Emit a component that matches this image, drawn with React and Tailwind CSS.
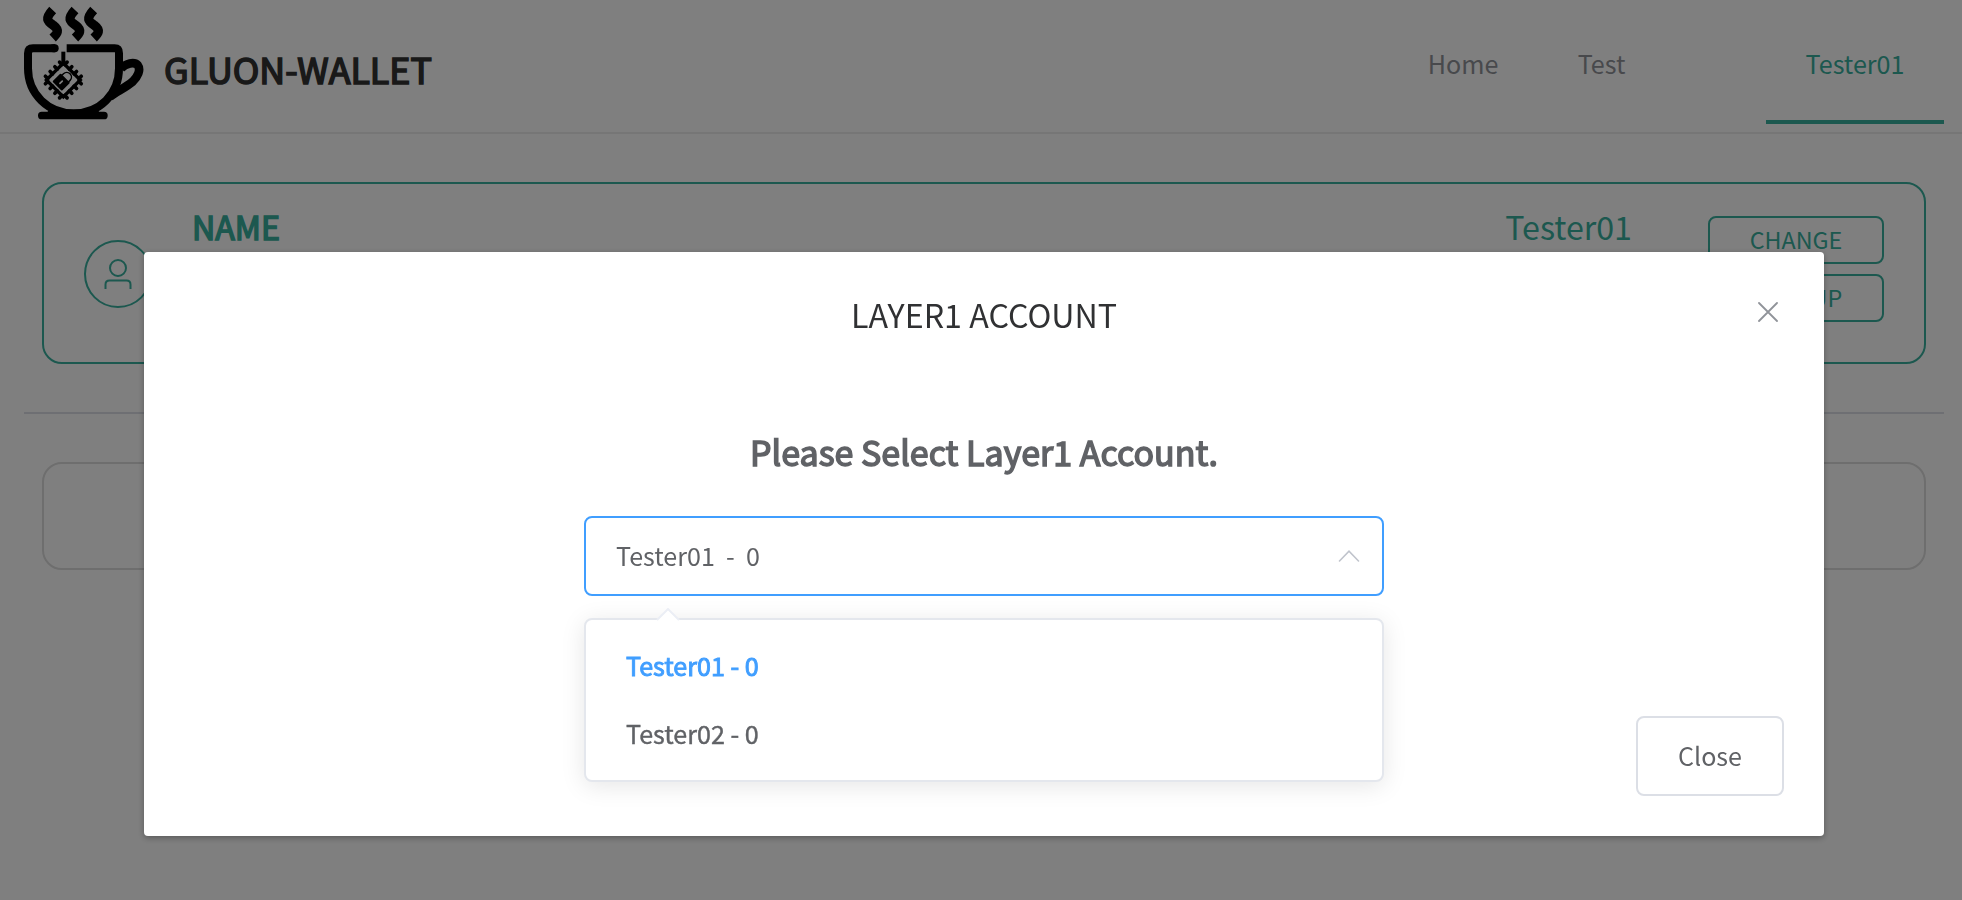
import React from "react";

function Logo() {
  return (
    <svg viewBox="72 18 360 342" className="h-[114px] w-[120px] shrink-0" fill="none" stroke="#000">
      <g strokeWidth="28">
        <path d="M158 30C134 56 142 64 160 76C180 91 172 101 158 114" />
        <path d="M225 30C201 56 209 64 227 76C247 91 239 101 225 114" />
        <path d="M281 30C257 56 265 64 283 76C303 91 295 101 281 114" />
      </g>
      <path strokeWidth="24" d="M166 145H99Q84 145 84 160V205C84 283 145 340 221 340C298 340 357 283 357 205V160Q357 145 344 145H200" />
      <path d="M160 145H164" strokeLinecap="round" strokeWidth="24" />
      <path d="M363 205C378 190 402 184 413 195C424 210 412 232 398 245C378 262 352 274 330 290" strokeWidth="26" />
      <rect x="114" y="335" width="209" height="23" rx="11" fill="#000" stroke="none" />
      <path d="M150 325Q220 352 290 325L300 340H140Z" fill="#000" stroke="none" />
      <path d="M190 155V186" strokeWidth="12" />
      <g transform="translate(190 240) rotate(45)">
        <rect x="-36" y="-36" width="72" height="72" strokeWidth="10" />
        <path
          strokeWidth="11"
          strokeLinecap="round"
          d="M-30 -36V-46M-10 -36V-46M10 -36V-46M30 -36V-46M-30 36V46M-10 36V46M10 36V46M30 36V46M-36 -30H-46M-36 -10H-46M-36 10H-46M-36 30H-46M36 -30H46M36 -10H46M36 10H46M36 30H46"
        />
      </g>
      <g transform="translate(184 246) rotate(45)">
        <rect x="-20" y="-17" width="40" height="35" rx="3" fill="#000" stroke="none" />
        <path d="M-13 -16V-22A14 14 0 0 1 15 -22V-14" strokeWidth="4.5" />
        <path d="M0 -4V6" stroke="#fff" strokeWidth="5" strokeLinecap="round" />
      </g>
    </svg>
  );
}

function Header() {
  return (
    <header className="flex h-[134px] items-start border-b-2 border-[#ececec] pl-6 pr-[18px]">
      <div className="pt-[6px]">
        <Logo />
      </div>
      <h1 className="ml-[20px] mt-10 text-[35.8px] leading-[56px] text-[#333] [-webkit-text-stroke:1.6px_#333]">
        GLUON-WALLET
      </h1>
      <nav className="ml-auto flex h-[124px] text-[25.1px] leading-[126px] text-[#909399]">
        <a className="w-[150px] text-center">Home</a>
        <a className="w-[127px] text-center">Test</a>
        <a className="ml-[101px] w-[178px] border-b-4 border-[#38b09e] text-center text-[#38b09e]">Tester01</a>
      </nav>
    </header>
  );
}

function ProfileCard() {
  return (
    <section className="ml-[42px] mt-12 flex h-[182px] w-[1884px] rounded-[20px] border-2 border-[#38b09e] pl-10 pr-10 text-[#38b09e]">
      <div className="mt-14 flex h-[68px] w-[68px] items-center justify-center rounded-full border-2 border-[#38b09e]">
        <svg viewBox="0 0 28 32" className="h-8 w-7" fill="none" stroke="currentColor" strokeWidth="2">
          <circle cx="14" cy="10" r="8" />
          <path d="M1.5 31V26.5Q1.5 22.500 5.500 22.500H22.500Q26.500 22.500 26.500 26.500V31" />
        </svg>
      </div>
      <h2 className="ml-[40px] mt-4 text-[32.2px] leading-[52px] [-webkit-text-stroke:1.5px_#38b09e]">NAME</h2>
      <p className="ml-auto mr-[76px] mt-4 text-[32.2px] leading-[52px]">Tester01</p>
      <div className="mt-8 flex w-[176px] flex-col gap-[10px] text-[23.3px]">
        <button className="h-12 rounded-lg border-2 border-[#38b09e] leading-[44px]">
          <span className="-mt-[2px] block leading-[46px]">CHANGE</span>
        </button>
        <button className="h-12 rounded-lg border-2 border-[#38b09e] leading-[44px]">
          <span className="-mt-[2px] block pl-[2px] leading-[46px]">BACKUP</span>
        </button>
      </div>
    </section>
  );
}

function AccountDropdown() {
  return (
    <div className="absolute left-0 top-[102px] w-[800px] rounded-lg border-2 border-[#e4e7ed] bg-white py-3 shadow-[0_4px_24px_rgba(0,0,0,0.1)]">
      <svg viewBox="0 0 24 13" className="absolute left-[70px] top-[-12px] h-[13px] w-6">
        <path d="M0 13L12 1L24 13Z" fill="#fff" />
        <path d="M1 12L12 1L23 12" fill="none" stroke="#ebeef5" strokeWidth="2" />
      </svg>
      <ul className="text-[25.1px] leading-[66px]">
        <li className="h-[68px] pl-10 text-[#409eff] [-webkit-text-stroke:0.9px_#409eff]">Tester01 - 0</li>
        <li className="h-[68px] pl-10 text-[#606266] [-webkit-text-stroke:0.4px_#606266]">Tester02 - 0</li>
      </ul>
    </div>
  );
}

function Dialog() {
  return (
    <div className="fixed inset-0 bg-black/50 pl-36 pt-[252px]">
      <div className="flex h-[584px] w-[1680px] flex-col rounded-[4px] bg-white shadow-[0_2px_6px_rgba(0,0,0,0.3)]">
        <div className="relative h-[128px] pt-[38px] text-center text-[32.2px] leading-[48px] text-[#303133]">
          LAYER1 ACCOUNT
          <svg viewBox="0 0 20 20" className="absolute right-[46px] top-[50px] h-5 w-5" stroke="#909399" strokeWidth="1.8" strokeLinecap="round">
            <path d="M1 1L19 19M19 1L1 19" />
          </svg>
        </div>
        <h3 className="mt-[46px] text-center text-[34px] leading-[52px] text-[#606266] [-webkit-text-stroke:1.5px_#606266]">
          Please Select Layer1 Account.
        </h3>
        <div className="relative mx-auto mt-[38px] w-[800px]">
          <div className="flex h-20 items-center justify-between rounded-lg border-2 border-[#409eff] pl-[30px] pr-[22px] text-[25.1px] text-[#606266]">
            <span className="-mt-[2px] whitespace-pre leading-[74px]">Tester01  -  0</span>
            <svg viewBox="0 0 22 12" className="h-3 w-[22px]" fill="none" stroke="#c0c4cc" strokeWidth="1.6" strokeLinecap="round">
              <path d="M1.500 11L11 1.200L20.500 11" />
            </svg>
          </div>
          <AccountDropdown />
        </div>
        <div className="mb-10 mr-10 mt-auto flex justify-end">
          <button className="h-20 w-[148px] rounded-lg border-2 border-[#dcdfe6] text-[25.1px] text-[#606266]">
            <span className="-mt-[2px] block leading-[74px]">Close</span>
          </button>
        </div>
      </div>
    </div>
  );
}

export default function App() {
  return (
    <div className="h-[900px] overflow-hidden bg-white font-['Noto_Sans_CJK_JP',sans-serif]">
      <Header />
      <ProfileCard />
      <div className="ml-6 mt-12 h-[2px] w-[1920px] bg-[#dcdfe6]" />
      <section className="ml-[42px] mt-12 h-[108px] w-[1884px] rounded-[20px] border-2 border-[#dcdcdc]" />
      <Dialog />
    </div>
  );
}
